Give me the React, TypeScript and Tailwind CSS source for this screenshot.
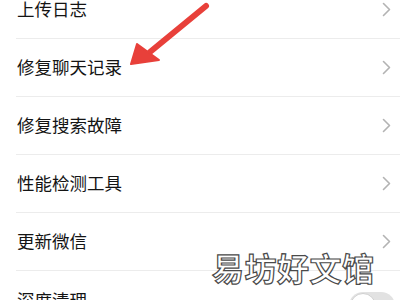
import React from "react";

const Chevron = () => (
  <svg width="9" height="15" viewBox="0 0 9 15" fill="none">
    <path d="M1.5 1.5L7.5 7.5L1.5 13.5" stroke="#b3b3b3" strokeWidth="1.6" strokeLinecap="round" strokeLinejoin="round" />
  </svg>
);

const rows = ["上传日志", "修复聊天记录", "修复搜索故障", "性能检测工具", "更新微信"];

export default function App() {
  return (
    <div className="relative w-[400px] h-[300px] overflow-hidden bg-white" style={{ fontFamily: '"Noto Sans CJK SC", "Noto Sans", sans-serif' }}>
      <div className="-mt-[19px]">
        {rows.map((r) => (
          <div key={r} className="ml-4 h-[58px] border-b border-[#ececec] flex items-center justify-between pr-[9px]">
            <span className="text-[17.5px] text-[#141414] pl-px">{r}</span>
            <Chevron />
          </div>
        ))}
        <div className="ml-4 h-[58px] flex items-center justify-between pr-[5px]">
          <span className="text-[17.5px] text-[#141414] pl-px">深度清理</span>
          <div className="w-[46px] h-[28px] rounded-full bg-[#e2e2e2] mt-[12px] flex items-center">
            <div className="w-[26px] h-[26px] rounded-full bg-white border border-[#d0d0d0] ml-px" />
          </div>
        </div>
      </div>
      <svg className="absolute left-0 top-0" width="400" height="300" viewBox="0 0 400 300">
        <line x1="206" y1="6" x2="150" y2="52" stroke="#e8403a" strokeWidth="6" strokeLinecap="round" />
        <polygon points="131,64 137,44 159,60" fill="#e8403a" stroke="#e8403a" strokeWidth="2" strokeLinejoin="round" />
      </svg>
      <div className="absolute left-[212px] top-[251px] text-[32px] font-bold text-white tracking-[0.5px] [-webkit-text-stroke:1.2px_#4a4a4a] leading-none">
        易坊好文馆
      </div>
    </div>
  );
}
